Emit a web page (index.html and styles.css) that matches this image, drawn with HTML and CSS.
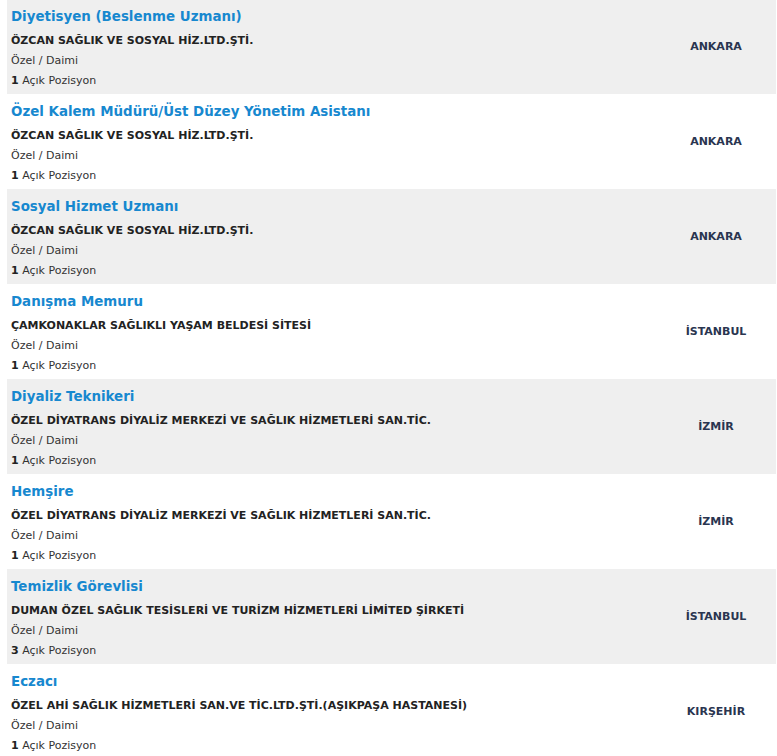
FILE: index.html
```html
<!DOCTYPE html>
<html lang="tr">
<head>
<meta charset="utf-8">
<link rel="stylesheet" href="styles.css">
</head>
<body>
<div class="page">
  <ul class="jobs">
    <li class="job alt">
      <div class="info">
        <a class="title">Diyetisyen (Beslenme Uzmanı)</a>
        <div class="company">ÖZCAN SAĞLIK VE SOSYAL HİZ.LTD.ŞTİ.</div>
        <div class="meta">Özel / Daimi</div>
        <div class="meta"><b>1</b> Açık Pozisyon</div>
      </div>
      <div class="city">ANKARA</div>
    </li>
    <li class="job">
      <div class="info">
        <a class="title">Özel Kalem Müdürü/Üst Düzey Yönetim Asistanı</a>
        <div class="company">ÖZCAN SAĞLIK VE SOSYAL HİZ.LTD.ŞTİ.</div>
        <div class="meta">Özel / Daimi</div>
        <div class="meta"><b>1</b> Açık Pozisyon</div>
      </div>
      <div class="city">ANKARA</div>
    </li>
    <li class="job alt">
      <div class="info">
        <a class="title">Sosyal Hizmet Uzmanı</a>
        <div class="company">ÖZCAN SAĞLIK VE SOSYAL HİZ.LTD.ŞTİ.</div>
        <div class="meta">Özel / Daimi</div>
        <div class="meta"><b>1</b> Açık Pozisyon</div>
      </div>
      <div class="city">ANKARA</div>
    </li>
    <li class="job">
      <div class="info">
        <a class="title">Danışma Memuru</a>
        <div class="company">ÇAMKONAKLAR SAĞLIKLI YAŞAM BELDESİ SİTESİ</div>
        <div class="meta">Özel / Daimi</div>
        <div class="meta"><b>1</b> Açık Pozisyon</div>
      </div>
      <div class="city">İSTANBUL</div>
    </li>
    <li class="job alt">
      <div class="info">
        <a class="title">Diyaliz Teknikeri</a>
        <div class="company">ÖZEL DİYATRANS DİYALİZ MERKEZİ VE SAĞLIK HİZMETLERİ SAN.TİC.</div>
        <div class="meta">Özel / Daimi</div>
        <div class="meta"><b>1</b> Açık Pozisyon</div>
      </div>
      <div class="city">İZMİR</div>
    </li>
    <li class="job">
      <div class="info">
        <a class="title">Hemşire</a>
        <div class="company">ÖZEL DİYATRANS DİYALİZ MERKEZİ VE SAĞLIK HİZMETLERİ SAN.TİC.</div>
        <div class="meta">Özel / Daimi</div>
        <div class="meta"><b>1</b> Açık Pozisyon</div>
      </div>
      <div class="city">İZMİR</div>
    </li>
    <li class="job alt">
      <div class="info">
        <a class="title">Temizlik Görevlisi</a>
        <div class="company">DUMAN ÖZEL SAĞLIK TESİSLERİ VE TURİZM HİZMETLERİ LİMİTED ŞİRKETİ</div>
        <div class="meta">Özel / Daimi</div>
        <div class="meta"><b>3</b> Açık Pozisyon</div>
      </div>
      <div class="city">İSTANBUL</div>
    </li>
    <li class="job">
      <div class="info">
        <a class="title">Eczacı</a>
        <div class="company">ÖZEL AHİ SAĞLIK HİZMETLERİ SAN.VE TİC.LTD.ŞTİ.(AŞIKPAŞA HASTANESİ)</div>
        <div class="meta">Özel / Daimi</div>
        <div class="meta"><b>1</b> Açık Pozisyon</div>
      </div>
      <div class="city">KIRŞEHİR</div>
    </li>
  </ul>
</div>
</body>
</html>
```

FILE: styles.css
```css
html, body {
  margin: 0;
  padding: 0;
  background: #ffffff;
}
.page {
  padding-left: 7px;
  width: 769px;
  font-family: "DejaVu Sans", sans-serif;
  color: #222;
}
.jobs {
  list-style: none;
  margin: -1px 0 0 0;
  padding: 0;
}
.job {
  display: grid;
  grid-template-columns: 1fr 120px;
  height: 95px;
  box-sizing: border-box;
  background: #ffffff;
}
.job.alt {
  background: #efefef;
}
.info {
  padding: 7px 0 0 4px;
  display: flex;
  flex-direction: column;
}
.title {
  font-weight: bold;
  font-size: 13.4px;
  line-height: 22px;
  color: #1788cf;
  margin-bottom: 3px;
}
.company {
  font-weight: bold;
  font-size: 11px;
  line-height: 20px;
  color: #222;
}
.meta {
  font-size: 11px;
  line-height: 20px;
  color: #333;
}
.meta b {
  color: #222;
}
.city {
  display: flex;
  align-items: center;
  justify-content: center;
  font-weight: bold;
  font-size: 11px;
  color: #2a3550;
}
```
